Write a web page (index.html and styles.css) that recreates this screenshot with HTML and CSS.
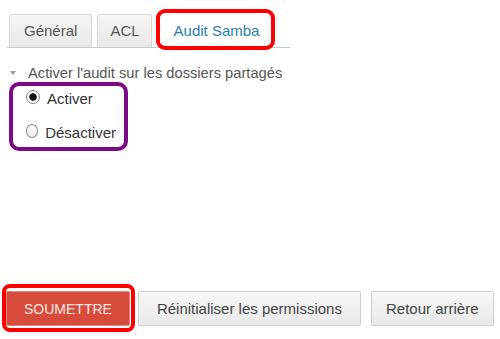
FILE: index.html
```html
<!DOCTYPE html>
<html lang="fr">
<head>
  <meta charset="UTF-8">
  <meta name="viewport" content="width=device-width, initial-scale=1">
  <title>Audit Samba</title>
  <link rel="stylesheet" href="styles.css">
</head>
<body>

<div class="page">
  <div class="tabs">
    <div class="tab">Général</div>
    <div class="tab tab-short">ACL</div>
    <div class="tab tab-active mark-red">Audit Samba</div>
  </div>

  <div class="panel">
    <div class="section-title"><span class="caret"></span>Activer l'audit sur les dossiers partagés</div>

    <div class="options">
      <label class="radio-row"><input type="radio" name="audit" checked> Activer</label>
      <label class="radio-row"><input type="radio" name="audit"> Désactiver</label>
    </div>
  </div>

  <div class="actions">
    <button class="btn btn-submit mark-red">SOUMETTRE</button>
    <button class="btn btn-reset">Réinitialiser les permissions</button>
    <button class="btn btn-back">Retour arrière</button>
  </div>
</div>

</body>
</html>
```

FILE: styles.css
```css
body {
  margin: 0;
  font-family: "Liberation Sans", Arial, sans-serif;
  font-size: 15px;
  color: #444;
  background: #fff;
}

.page {
  height: 339px;
  display: flex;
  flex-direction: column;
  box-sizing: border-box;
  padding-bottom: 13px;
}

/* tabs */
.tabs {
  display: flex;
  align-items: flex-end;
  width: 281px;
  margin-left: 7px;
  padding: 14px 0 0 2px;
  border-bottom: 1px solid #c9c9c9;
}

.tab {
  height: 32px;
  line-height: 32px;
  padding: 0 14px;
  margin-right: 5px;
  color: #555;
  background: linear-gradient(180deg, #f6f6f6, #e8e8e8);
  border: 1px solid #d6d6d6;
  border-bottom: none;
  border-radius: 3px 3px 0 0;
}

.tab-short {
  padding: 0 11px 0 12px;
}

.tab-active {
  margin-left: 5px;
  padding: 0 10px 0 11px;
  background: #fff;
  border-color: #fff;
  color: #2b7bb3;
}

/* red annotation frames */
.mark-red {
  position: relative;
}

.tab-active.mark-red::after {
  content: "";
  position: absolute;
  top: -6px;
  left: -7px;
  right: -6px;
  bottom: -3px;
  border: 4px solid #f00;
  border-radius: 9px;
}

.btn-submit.mark-red::after {
  content: "";
  position: absolute;
  top: -8px;
  left: -5px;
  right: -6px;
  bottom: -7px;
  border: 4px solid #f00;
  border-radius: 8px;
}

/* panel */
.panel {
  padding-left: 9px;
}

.section-title {
  display: flex;
  align-items: center;
  margin-top: 16px;
  height: 17px;
  color: #555;
  font-size: 14.7px;
}

.caret {
  width: 0;
  height: 0;
  margin: 1px 12px 0 1px;
  border-left: 3.5px solid transparent;
  border-right: 3.5px solid transparent;
  border-top: 4px solid #9a9a9a;
}

.options {
  width: 119px;
  box-sizing: border-box;
  margin-top: 1px;
  padding: 2px 8px 5px 13px;
  border: 4px solid #7e0b86;
  border-radius: 10px;
  display: flex;
  flex-direction: column;
  gap: 14px;
}

.radio-row {
  display: flex;
  align-items: center;
  height: 20px;
  color: #333;
}

.radio-row input {
  appearance: none;
  width: 14px;
  height: 14px;
  margin: -2px 7px 0 0;
  border: 1px solid #8a8a8a;
  border-radius: 50%;
  background: linear-gradient(180deg, #fff, #ececec);
}

.radio-row input:checked {
  background: radial-gradient(circle, #111 0, #111 3.4px, #fff 4px, #f0f0f0 100%);
}

/* bottom buttons */
.actions {
  margin-top: auto;
  display: flex;
  padding-left: 6px;
}

.btn {
  height: 35px;
  padding: 0 14px;
  font-family: inherit;
  font-size: 15px;
  color: #444;
  background: linear-gradient(180deg, #f7f7f7, #e9e9e9);
  border: 1px solid #cfcfcf;
  border-radius: 2px;
}

.btn-submit {
  padding: 0 17px;
  margin-right: 8px;
  font-size: 14px;
  color: #fde8e4;
  background: #d74b3b;
  border: 1px solid #e6877b;
}

.btn-reset {
  padding: 0 18px;
  margin-right: 10px;
}
```
